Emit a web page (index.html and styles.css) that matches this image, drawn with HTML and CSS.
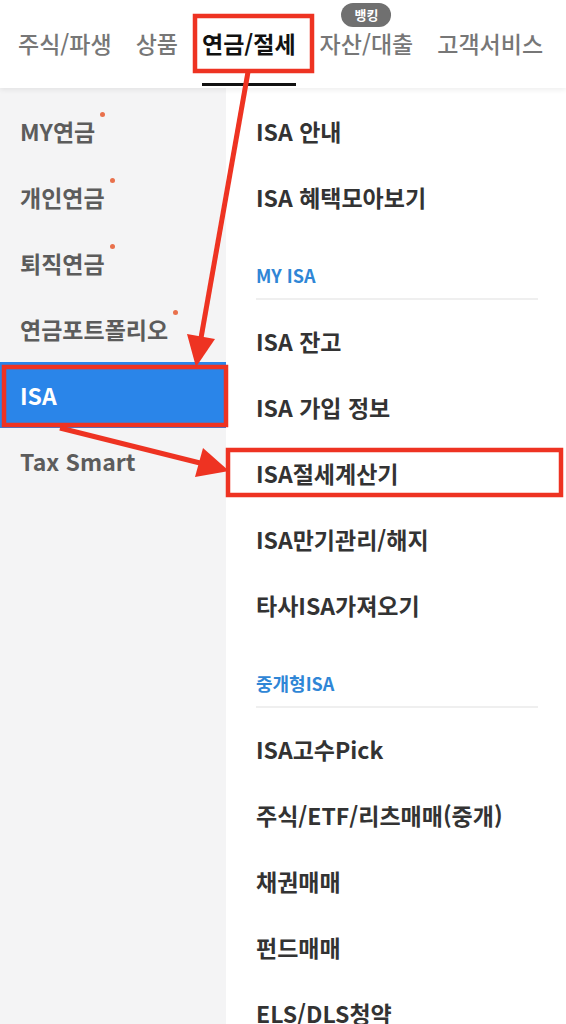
FILE: index.html
```html
<!DOCTYPE html>
<html lang="ko">
<head>
  <meta charset="UTF-8">
  <meta name="viewport" content="width=device-width, initial-scale=1.0">
  <title>연금/절세 메뉴</title>
  <link rel="stylesheet" href="styles.css">
</head>
<body>

<div class="page">
  <nav class="gnb">
    <a class="tab">주식/파생</a>
    <a class="tab">상품</a>
    <a class="tab active">연금/절세</a>
    <a class="tab">자산/대출<span class="badge">뱅킹</span></a>
    <a class="tab">고객서비스</a>
  </nav>

  <div class="menu">
    <ul class="side">
      <li class="dot">MY연금</li>
      <li class="dot">개인연금</li>
      <li class="dot">퇴직연금</li>
      <li class="dot">연금포트폴리오</li>
      <li class="selected">ISA</li>
      <li>Tax Smart</li>
    </ul>

    <div class="sub">
      <ul>
        <li>ISA 안내</li>
        <li>ISA 혜택모아보기</li>
      </ul>
      <h4>MY ISA</h4>
      <ul>
        <li>ISA 잔고</li>
        <li>ISA 가입 정보</li>
        <li>ISA절세계산기</li>
        <li>ISA만기관리/해지</li>
        <li>타사ISA가져오기</li>
      </ul>
      <h4>중개형ISA</h4>
      <ul>
        <li>ISA고수Pick</li>
        <li>주식/ETF/리츠매매(중개)</li>
        <li>채권매매</li>
        <li>펀드매매</li>
        <li>ELS/DLS청약</li>
      </ul>
    </div>
  </div>

  <!-- annotation marks drawn over the screenshot -->
  <svg class="marks" width="566" height="1024" viewBox="0 0 566 1024">
    <g fill="none" stroke="#ee3322" stroke-width="4.5">
      <rect x="195" y="16" width="117" height="55"/>
      <rect x="4" y="367" width="222" height="58"/>
      <rect x="228" y="450" width="333" height="45"/>
      <line x1="248" y1="72" x2="201" y2="338" stroke-width="5"/>
      <line x1="60" y1="428" x2="200" y2="463" stroke-width="5"/>
    </g>
    <g fill="#ee3322">
      <polygon points="196,367 215,339 187,334"/>
      <polygon points="229,471 195,477 203,448"/>
    </g>
  </svg>
</div>

</body>
</html>
```

FILE: styles.css
```css
body { margin: 0; background: #fff; font-family: "Noto Sans CJK KR", "Noto Sans", sans-serif; }
ul { list-style: none; margin: 0; padding: 0; }

.page { position: relative; width: 566px; height: 1024px; overflow: hidden; }

/* top tabs */
.gnb { display: flex; gap: 24px; height: 88px; padding-left: 18px; box-sizing: border-box; align-items: stretch;
  position: relative; z-index: 1; background: #fff; box-shadow: 0 2px 5px rgba(0, 0, 0, 0.07); }
.tab { position: relative; display: flex; align-items: center; padding-top: 2px; font-size: 23px; font-weight: 500;
  color: #777; white-space: nowrap; border-bottom: 3px solid transparent; box-sizing: border-box; height: 86px; }
.tab.active { color: #111; font-weight: 700; border-bottom-color: #111; }
.badge { position: absolute; left: 50%; top: 3px; transform: translateX(-50%); background: #707070; color: #fff;
  font-size: 13px; font-weight: 700; line-height: 24px; padding: 0 13px; border-radius: 12px; }

/* menu body */
.menu { display: flex; }
.side { width: 226px; flex: none; background: #f4f4f5; padding-top: 10px; min-height: 936px; }
.side li { height: 66px; display: flex; align-items: center; padding-left: 20px; font-size: 23px; font-weight: 700;
  color: #5c5c5c; }
.side li.dot::after { content: ""; width: 5px; height: 5px; border-radius: 50%; background: #e9714c;
  align-self: flex-start; margin: 14px 0 0 5px; }
.side li.selected { background: #2a85e9; color: #fff; }

.sub { flex: 1; padding: 10px 28px 0 30px; }
.sub li { height: 66px; display: flex; align-items: center; font-size: 23px; font-weight: 700; color: #333; }
.sub h4 { margin: 0 0 8px; height: 70px; box-sizing: border-box; padding-top: 32px; font-size: 18px; font-weight: 700;
  color: #2f86d6; border-bottom: 2px solid #efefef; }

.marks { position: absolute; left: 0; top: 0; z-index: 2; pointer-events: none; }
```
